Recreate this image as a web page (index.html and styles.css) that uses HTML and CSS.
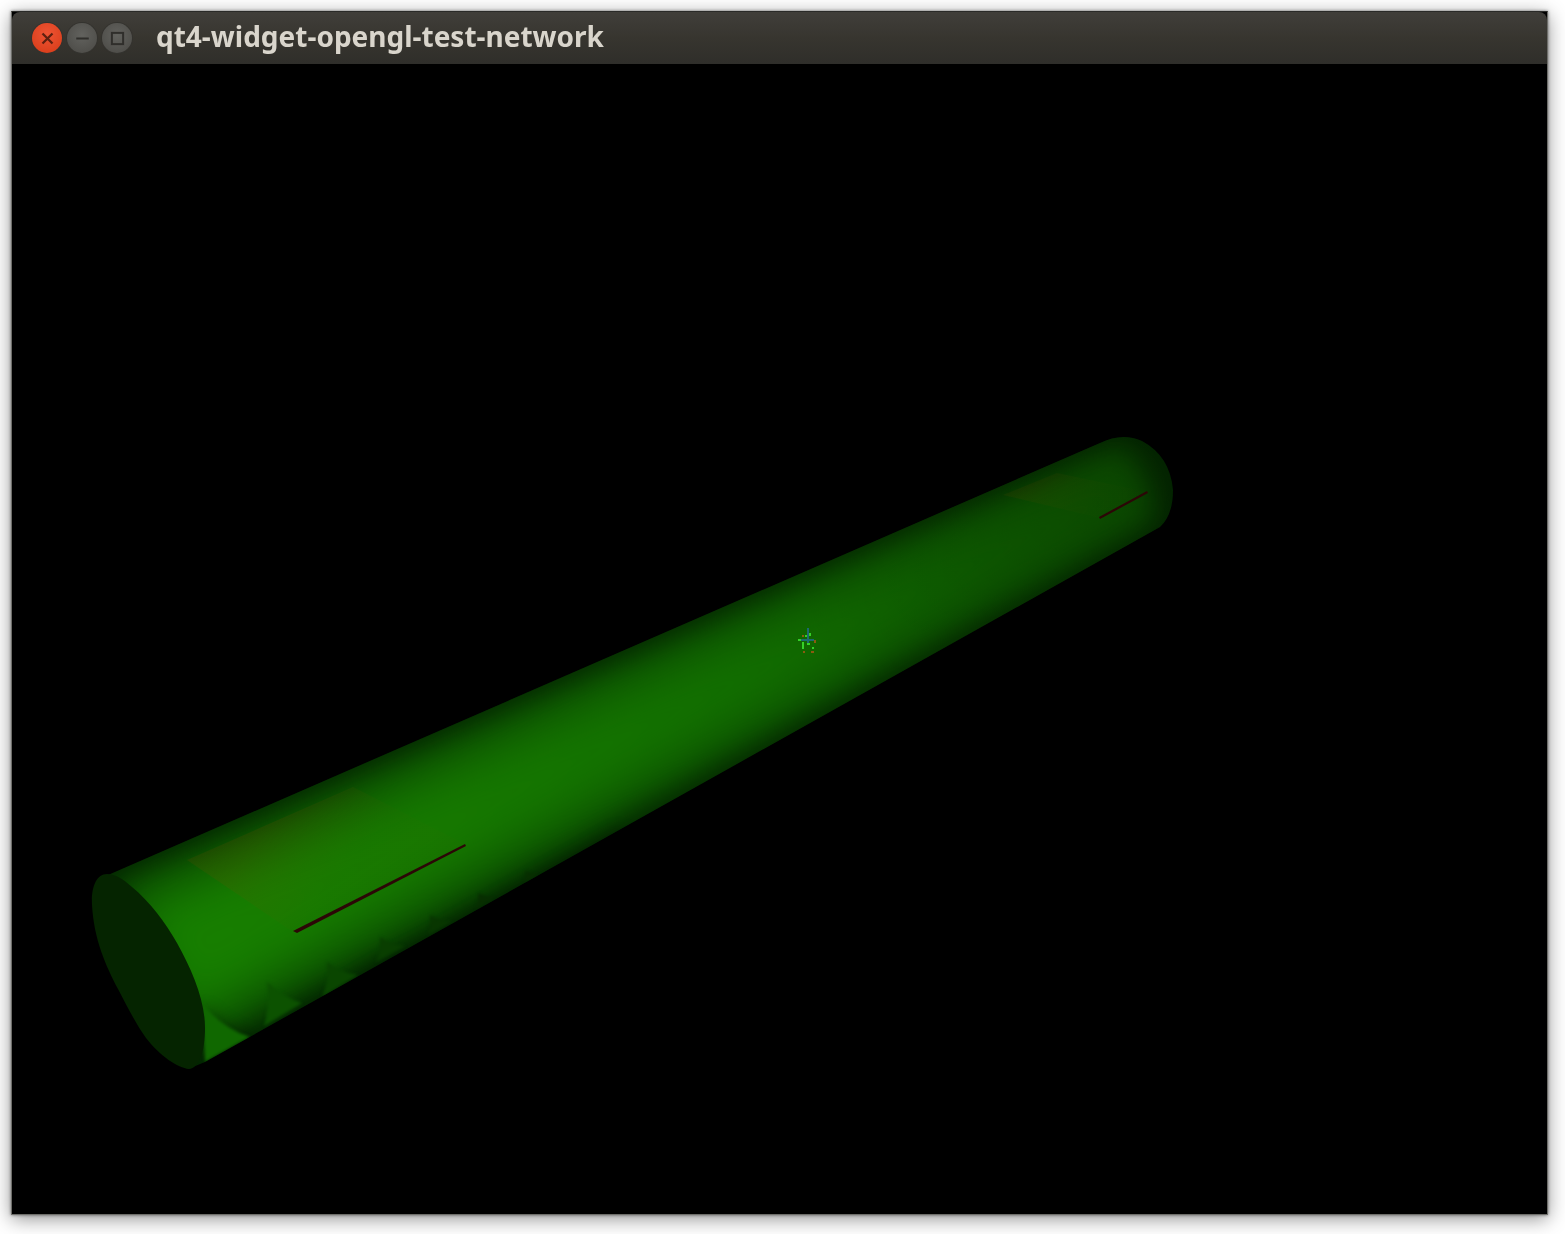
FILE: index.html
```html
<!DOCTYPE html>
<html lang="en">
<head>
<meta charset="utf-8">
<title>qt4-widget-opengl-test-network</title>
<link rel="stylesheet" href="styles.css">
</head>
<body>
<main class="window">
  <header class="titlebar">
    <div class="controls">
      <span class="btn btn-close">
        <svg class="glyph" viewBox="0 0 12 12"><path d="M2 2 10 10M10 2 2 10" class="glyph-close"/></svg>
      </span>
      <span class="btn">
        <svg class="glyph" viewBox="0 0 12 12"><path d="M1 6H11" class="glyph-line"/></svg>
      </span>
      <span class="btn">
        <svg class="glyph" viewBox="0 0 12 12"><rect x="1.5" y="1.5" width="9" height="9" class="glyph-line"/></svg>
      </span>
    </div>
    <h1 class="title">qt4-widget-opengl-test-network</h1>
  </header>
  <div class="viewport">
    <svg class="scene" viewBox="12 64 1535 1150" preserveAspectRatio="none">
      <defs>
        <filter id="blurWide" color-interpolation-filters="sRGB" filterUnits="userSpaceOnUse" x="0" y="350" width="1300" height="800"><feGaussianBlur stdDeviation="14"/></filter>
        <filter id="blurMid" color-interpolation-filters="sRGB" filterUnits="userSpaceOnUse" x="0" y="350" width="1300" height="800"><feGaussianBlur stdDeviation="24"/></filter>
        <filter id="blurShade" color-interpolation-filters="sRGB" filterUnits="userSpaceOnUse" x="100" y="700" width="700" height="450"><feGaussianBlur stdDeviation="8"/></filter>
        <filter id="soft" color-interpolation-filters="sRGB" filterUnits="userSpaceOnUse" x="100" y="700" width="700" height="450"><feGaussianBlur stdDeviation="1.4"/></filter>
        <clipPath id="bodyClip">
          <path d="M108 875 1100 443Q1122 432 1142 441 1170 456 1173 490 1173 515 1160 527L205 1062 188 1069 150 970Z"/>
        </clipPath>
        <linearGradient id="coreFill" gradientUnits="userSpaceOnUse" x1="150" y1="970" x2="1150" y2="480">
          <stop offset="0" stop-color="#178000"/>
          <stop offset=".3" stop-color="#167800"/>
          <stop offset=".6" stop-color="#126e00"/>
          <stop offset=".8" stop-color="#0f6000"/>
          <stop offset="1" stop-color="#0d5400"/>
        </linearGradient>
        <linearGradient id="farShade" gradientUnits="userSpaceOnUse" x1="800" y1="620" x2="1170" y2="450">
          <stop offset="0" stop-color="#000" stop-opacity="0"/>
          <stop offset="1" stop-color="#000" stop-opacity=".16"/>
        </linearGradient>
        <linearGradient id="panelNear" gradientUnits="userSpaceOnUse" x1="270" y1="825" x2="340" y2="880">
          <stop offset="0" stop-color="#7a4a00" stop-opacity=".16"/>
          <stop offset="1" stop-color="#5a5a00" stop-opacity=".04"/>
        </linearGradient>
        <linearGradient id="panelFar" gradientUnits="userSpaceOnUse" x1="1040" y1="470" x2="1100" y2="510">
          <stop offset="0" stop-color="#7a4a00" stop-opacity=".12"/>
          <stop offset="1" stop-color="#5a5a00" stop-opacity=".03"/>
        </linearGradient>
      </defs>
      <g clip-path="url(#bodyClip)">
        <rect x="0" y="400" width="1300" height="700" class="body-base"/>
        <path d="M112 885 1124 445 1156 518 198 1050Z" class="band-outer" filter="url(#blurWide)"/>
        <path d="M126 910 1130 458 1150 505 185 1025Z" fill="url(#coreFill)" filter="url(#blurMid)"/>
        <path d="M187 860 353 787 463 843 293 932Z" fill="url(#panelNear)"/>
        <path d="M1003 495 1057 473 1148 492 1100 518Z" fill="url(#panelFar)"/>
        <rect x="0" y="400" width="1300" height="700" fill="url(#farShade)"/>
        <path d="M206 1070 204 1005Q225 1032 262 1040L300 1012Q325 1000 345 985L395 955Q415 948 440 932L500 898 620 830 640 850 220 1085Z" class="scallop-shade" filter="url(#blurShade)"/>
        <path d="M202 1003Q222 1028 250 1037L205 1062Z" class="wedge wedge-1" filter="url(#soft)"/>
        <path d="M267 982Q285 998 302 1003L264 1026Q270 1005 267 982Z" class="wedge wedge-2" filter="url(#soft)"/>
        <path d="M327 962Q340 972 358 975L322 997Q329 980 327 962Z" class="wedge wedge-3" filter="url(#soft)"/>
        <path d="M380 937Q392 945 405 946L376 962Q381 950 380 937Z" class="wedge wedge-4" filter="url(#soft)"/>
        <path d="M430 915Q440 921 452 921L428 935Q431 925 430 915Z" class="wedge wedge-5" filter="url(#soft)"/>
        <path d="M478 893Q486 897 494 898L476 908Q479 900 478 893Z" class="wedge wedge-6" filter="url(#soft)"/>
        <path d="M525 871Q532 874 538 875L524 883Q526 877 525 871Z" class="wedge wedge-6" filter="url(#soft)"/>
      </g>
      <path d="M107 874C96 874 91 888 92 905 94 940 106 966 118 989 128 1008 136 1024 146 1038 160 1056 178 1068 189 1069 199 1068 205 1052 205 1028 205 1000 192 970 177 943 165 922 150 902 132 887 123 879 115 874 107 874Z" class="cap"/>
      <path d="M293 931 297 933 466 846 465 844Z" class="scratch"/>
      <path d="M1099 517 1100 519 1148 493 1147 491Z" class="scratch"/>
      <g class="specks">
        <rect x="807" y="628" width="2" height="15" class="sp-blue"/>
        <rect x="801" y="639" width="13" height="2" class="sp-blue"/>
        <rect x="802" y="642" width="2" height="7" class="sp-lime"/>
        <rect x="798" y="639" width="3" height="2" class="sp-lime"/>
        <rect x="805" y="635" width="2" height="2" class="sp-lime"/>
        <rect x="809" y="633" width="2" height="3" class="sp-lime"/>
        <rect x="807" y="643" width="3" height="2" class="sp-lime"/>
        <rect x="812" y="647" width="2" height="2" class="sp-lime"/>
        <rect x="803" y="651" width="2" height="2" class="sp-orange"/>
        <rect x="811" y="651" width="3" height="2" class="sp-orange"/>
        <rect x="814" y="640" width="2" height="3" class="sp-orange"/>
        <rect x="802" y="635" width="2" height="2" class="sp-orange"/>
      </g>
    </svg>
  </div>
</main>
</body>
</html>
```
FILE: styles.css
```css
html, body {
  margin: 0;
  height: 100%;
  background: #fff;
  overflow: hidden;
}

body {
  padding: 11px 17px 19px 11px;
  box-sizing: border-box;
  display: flex;
}

.window {
  flex: 1;
  display: flex;
  flex-direction: column;
  background: #000;
  box-shadow: 0 4px 18px rgba(0, 0, 0, .42), 0 0 3px rgba(0, 0, 0, .5);
  border: 1px solid #6e6e6a;
  border-top-color: #2a2a28;
  min-width: 0;
}

.titlebar {
  height: 52px;
  flex: none;
  display: flex;
  align-items: center;
  gap: 24px;
  padding: 0 0 0 20px;
  background: linear-gradient(#403e3a, #37352f 50%, #2f2e2a);
  border-radius: 8px 8px 0 0;
}

.controls {
  display: flex;
  gap: 5px;
  filter: blur(.6px);
}

.btn {
  width: 30px;
  height: 30px;
  border-radius: 50%;
  display: flex;
  align-items: center;
  justify-content: center;
  background: radial-gradient(circle at 50% 40%, #62625e, #494844);
  box-shadow: 0 0 0 1px #34332f;
}

.btn-close {
  background: radial-gradient(circle at 50% 35%, #ee5434, #d63a16);
}

.glyph {
  width: 15px;
  height: 15px;
}

.glyph-close {
  fill: none;
  stroke: #5e2010;
  stroke-width: 1.8;
}

.glyph-line {
  fill: none;
  stroke: #2f2e2b;
  stroke-width: 1.6;
}

.title {
  margin: 0 0 4px;
  font: 700 28px/1 "Noto Sans", "Open Sans", sans-serif;
  color: #d9d5cc;
  white-space: nowrap;
  filter: blur(.5px);
}

.viewport {
  flex: 1;
  min-height: 0;
  background: #000;
}

.scene {
  display: block;
  width: 100%;
  height: 100%;
}

.body-base { fill: #042600; }
.band-outer { fill: #0b4e00; }
.scallop-shade { fill: #000; opacity: .34; }
.wedge { fill: #0f6200; }
.wedge-1 { fill: #106800; }
.wedge-2 { fill: #0c5200; }
.wedge-3 { fill: #0a4600; }
.wedge-4 { fill: #093e00; }
.wedge-5 { fill: #083600; }
.wedge-6 { fill: #072e00; }
.cap { fill: #052400; }
.scratch { fill: #2c0606; }
.specks { filter: blur(.5px); }
.sp-blue { fill: #1d6a70; }
.sp-lime { fill: #35d028; }
.sp-orange { fill: #8a5a10; }
```
